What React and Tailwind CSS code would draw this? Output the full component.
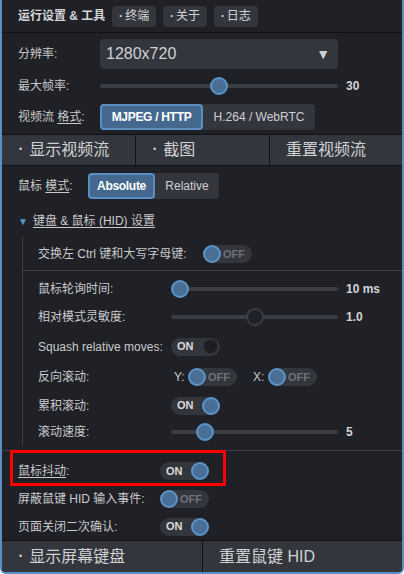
import React from 'react';

const font = { fontFamily: '"Liberation Sans", "Noto Sans CJK SC", sans-serif' };

function Toggle({ on, dim }) {
  return (
    <div className="shrink-0 w-[49px] h-[18px] rounded-full bg-[#33363d] flex items-center justify-between">
      {on ? (
        <>
          <span className="pl-[6px] text-[11px] font-bold text-[#dcdcdc]">ON</span>
          {dim ? (
            <span className="shrink-0 w-[15px] h-[15px] mr-[2px] rounded-full bg-[#1c1e22] border border-[#2b2e33]" />
          ) : (
            <span className="shrink-0 w-[18px] h-[18px] rounded-full bg-[#4a6f96] border-2 border-[#5b94c8]" />
          )}
        </>
      ) : (
        <>
          <span className="shrink-0 w-[18px] h-[18px] rounded-full bg-[#4a6f96] border-2 border-[#5b94c8]" />
          <span className="pr-[7px] text-[11px] font-bold text-[#6e727a]">OFF</span>
        </>
      )}
    </div>
  );
}

function Slider({ width, pos, dark }) {
  return (
    <div className="shrink-0 relative h-[18px] flex items-center" style={{ width }}>
      <div className="w-full h-[4px] rounded-full bg-[#3a3d44]" />
      <span
        className={`absolute top-0 w-[18px] h-[18px] rounded-full border-2 ${
          dark ? 'bg-[#1f2126] border-[#3a3d44]' : 'bg-[#4a6f96] border-[#5b94c8]'
        }`}
        style={{ left: pos * (width - 18) }}
      />
    </div>
  );
}

function Segmented({ items, active, widths }) {
  return (
    <div className="shrink-0 flex h-[26px] rounded-[4px] bg-[#33363d]">
      {items.map((it, i) => (
        <div
          key={it}
          style={{ width: widths[i] }}
          className={`flex items-center justify-center whitespace-nowrap text-[12px] rounded-[4px] ${
            i === active
              ? 'bg-[#45698e] border-2 border-[#5b8fc4] text-white font-bold tracking-[-0.3px]'
              : 'text-[#cfd0d3]'
          }`}
        >
          {it}
        </div>
      ))}
    </div>
  );
}

function Label({ w, children }) {
  return (
    <span className="shrink-0 whitespace-nowrap" style={{ width: w }}>
      {children}
    </span>
  );
}

export default function App() {
  return (
    <div
      style={font}
      className="relative w-[404px] h-[574px] bg-[#1f2126] border-x-2 border-b-2 border-[#5b8fc4] rounded-b-[6px] overflow-hidden flex flex-col text-[12px] text-[#c9cacd]"
    >
      {/* header */}
      <div className="h-[33px] flex items-center gap-[7px] pl-4 border-b border-[#111215]">
        <span className="font-bold text-[#d4d5d8]">运行设置 &amp; 工具</span>
        {['终端', '关于', '日志'].map((t) => (
          <span key={t} className="h-[21px] px-[7px] flex items-center rounded-[4px] bg-[#33363d] text-[#d4d5d8]">
            <span className="text-[8px] mr-[3px]">•</span>
            {t}
          </span>
        ))}
      </div>

      {/* stream settings */}
      <div className="pl-4 pt-[6px] pb-[4px] border-b border-[#111215]">
        <div className="flex items-center h-[30px]">
          <Label w={82}>分辨率:</Label>
          <div className="w-[238px] h-[30px] rounded-[4px] bg-[#33363d] flex items-center justify-between px-[6px]">
            <span className="text-[16px] text-[#d0d1d4]">1280x720</span>
            <span className="text-[14px] text-[#d0d1d4] mr-[2px]">▼</span>
          </div>
        </div>
        <div className="flex items-center h-[28px] mt-[3px]">
          <Label w={82}>最大帧率:</Label>
          <Slider width={238} pos={0.5} />
          <span className="ml-[8px] font-bold text-[#d4d5d8]">30</span>
        </div>
        <div className="flex items-center h-[26px] mt-[4px]">
          <Label w={82}>
            视频流 <span className="underline underline-offset-2">格式</span>:
          </Label>
          <Segmented items={['MJPEG / HTTP', 'H.264 / WebRTC']} active={0} widths={[103, 112]} />
        </div>
      </div>

      {/* stream buttons */}
      <div className="flex h-[31px] text-[16px] text-[#d0d1d4] border-b border-[#111215]">
        <div className="w-[134px] bg-[#33363d] flex items-center pl-4 border-r border-[#111215]">
          <span className="text-[9px] ml-[1px] mr-[7px]">•</span>显示视频流
        </div>
        <div className="w-[134px] bg-[#33363d] flex items-center pl-4 border-r border-[#111215]">
          <span className="text-[9px] ml-[1px] mr-[7px]">•</span>截图
        </div>
        <div className="flex-1 bg-[#33363d] flex items-center pl-4">重置视频流</div>
      </div>

      {/* mouse mode */}
      <div className="pl-4 flex items-center h-[26px] mt-[7px]">
        <Label w={70}>
          鼠标 <span className="underline underline-offset-2">模式</span>:
        </Label>
        <Segmented items={['Absolute', 'Relative']} active={0} widths={[67, 64]} />
      </div>

      {/* HID section */}
      <div className="pl-4 flex items-center h-[20px] mt-[12px]">
        <span className="text-[#5b94c8] text-[10px] mr-[5px]">▼</span>
        <span className="underline underline-offset-2">键盘 &amp; 鼠标 (HID) 设置</span>
      </div>
      <div className="ml-[20px] mt-[5px] border-l border-[#3a3d44] h-[210px]">
        <div className="pl-[15px] pt-[7px] pb-[5px] border-b border-[#3a3d44]">
          <div className="flex items-center h-[22px]">
            <Label w={165}>交换左 Ctrl 键和大写字母键:</Label>
            <Toggle on={false} />
          </div>
        </div>
        <div className="pl-[15px] pt-[4px]">
          <div className="flex items-center h-[27px]">
            <Label w={133}>鼠标轮询时间:</Label>
            <Slider width={167} pos={0} />
            <span className="ml-[8px] font-bold text-[#d4d5d8]">10 ms</span>
          </div>
          <div className="flex items-center h-[29px]">
            <Label w={133}>相对模式灵敏度:</Label>
            <Slider width={167} pos={0.5} dark />
            <span className="ml-[8px] font-bold text-[#d4d5d8]">1.0</span>
          </div>
          <div className="flex items-center h-[31px]">
            <Label w={133}>Squash relative moves:</Label>
            <Toggle on dim />
          </div>
          <div className="flex items-center h-[30px]">
            <Label w={136}>反向滚动:</Label>
            <Label w={14}>Y:</Label>
            <Toggle on={false} />
            <span className="shrink-0 ml-[16px] w-[15px]">X:</span>
            <Toggle on={false} />
          </div>
          <div className="flex items-center h-[27px]">
            <Label w={133}>累积滚动:</Label>
            <Toggle on />
          </div>
          <div className="flex items-center h-[26px]">
            <Label w={133}>滚动速度:</Label>
            <Slider width={167} pos={0.17} />
            <span className="ml-[8px] font-bold text-[#d4d5d8]">5</span>
          </div>
        </div>
      </div>

      <div className="mt-[4px] border-t border-[#3a3d44] pl-4 pt-[6px]">
        <div className="flex items-center h-[28px]">
          <Label w={142}>
            <span className="underline underline-offset-2">鼠标抖动</span>:
          </Label>
          <Toggle on />
        </div>
        <div className="flex items-center h-[28px]">
          <Label w={142}>屏蔽鼠键 HID 输入事件:</Label>
          <Toggle on={false} />
        </div>
        <div className="flex items-center h-[27px]">
          <Label w={142}>页面关闭二次确认:</Label>
          <Toggle on />
        </div>
      </div>

      {/* bottom buttons */}
      <div className="mt-auto flex h-[32px] text-[16px] text-[#d0d1d4] border-t border-[#111215]">
        <div className="w-[201px] bg-[#33363d] flex items-center pl-4 border-r border-[#111215]">
          <span className="text-[9px] ml-[1px] mr-[7px]">•</span>显示屏幕键盘
        </div>
        <div className="flex-1 bg-[#33363d] flex items-center pl-4">重置鼠键 HID</div>
      </div>

      {/* highlight annotation */}
      <div className="absolute left-[8px] top-[450px] w-[216px] h-[36px] border-[3px] border-[#ff0000] rounded-[1px]" />
    </div>
  );
}
